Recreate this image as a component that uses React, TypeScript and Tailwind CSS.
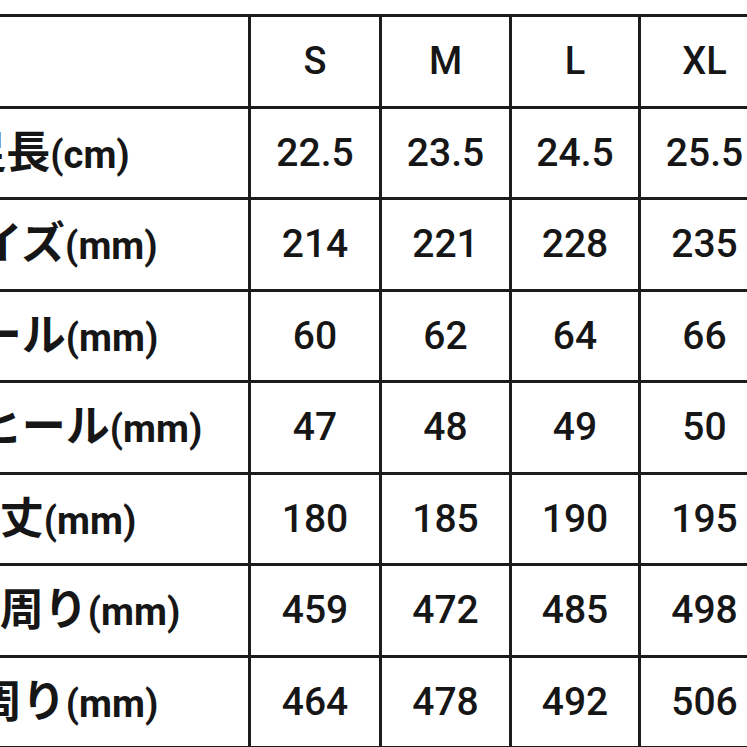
import React from "react";

const sizes = ["S", "M", "L", "XL"];

const rows = [
  { jp: "足長", unit: "(cm)", values: ["22.5", "23.5", "24.5", "25.5"] },
  { jp: "ワイズ", unit: "(mm)", values: ["214", "221", "228", "235"] },
  { jp: "ヒール", unit: "(mm)", values: ["60", "62", "64", "66"] },
  { jp: "インヒール", unit: "(mm)", values: ["47", "48", "49", "50"] },
  { jp: "筒丈", unit: "(mm)", values: ["180", "185", "190", "195"] },
  { jp: "足首周り", unit: "(mm)", values: ["459", "472", "485", "498"] },
  { jp: "筒周り", unit: "(mm)", values: ["464", "478", "492", "506"] },
];

export default function App() {
  return (
    <div className="w-[747px] h-[747px] overflow-hidden bg-white">
      <div
        className="mt-[14px] -ml-[159px] w-[1050px] grid grid-cols-[404px_128px_127px_126px_127px_1fr] auto-rows-[88.5px] gap-[3px] p-[3px] bg-[#1c1c1c] text-[#161616]"
        style={{ fontFamily: "Roboto, 'Noto Sans CJK JP', sans-serif" }}
      >
        {/* header */}
        <div className="bg-white" />
        {sizes.map((s) => (
          <div key={s} className="bg-white flex items-center justify-center text-[38px] font-medium">
            {s}
          </div>
        ))}
        <div className="bg-white" />

        {rows.map((row) => (
          <React.Fragment key={row.jp}>
            <div className="bg-white flex items-center justify-center font-bold whitespace-nowrap">
              <span className="leading-none">
                <span className="text-[44px]">{row.jp}</span>
                <span className="text-[38px]">{row.unit}</span>
              </span>
            </div>
            {row.values.map((v, i) => (
              <div key={i} className="bg-white flex items-center justify-center text-[39px] font-medium">
                {v}
              </div>
            ))}
            <div className="bg-white" />
          </React.Fragment>
        ))}
      </div>
    </div>
  );
}
